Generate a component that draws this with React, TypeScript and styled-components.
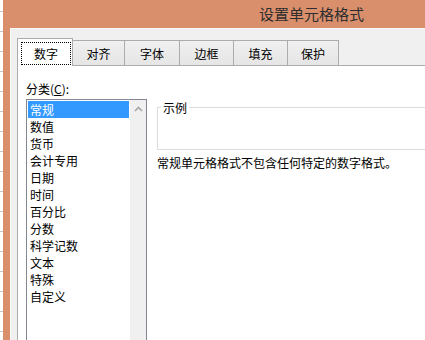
import React from "react";
import styled, { createGlobalStyle } from "styled-components";

const Global = createGlobalStyle`
  html, body { margin: 0; padding: 0; background: #ffffff; }
  body { font-family: "Noto Sans CJK SC", "Noto Sans", sans-serif; }
  * { box-sizing: border-box; }
`;

const Screen = styled.div`
  width: 425px;
  height: 340px;
  overflow: hidden;
  display: flex;
  background: #ffffff;
`;

const SheetEdge = styled.div`
  width: 3px;
  flex: none;
  background: repeating-linear-gradient(
    to bottom,
    #ffffff 0px,
    #ffffff 11px,
    #c6c6c6 11px,
    #c6c6c6 12px,
    #ffffff 12px,
    #ffffff 20px
  );
  background-position: 0 20px;
`;

const Dialog = styled.div`
  flex: 1;
  display: flex;
  flex-direction: column;
  background: #d98e6c;
  min-width: 0;
`;

const TitleBar = styled.div`
  height: 28px;
  flex: none;
  display: flex;
  align-items: center;
  padding-left: 256px;
`;

const Title = styled.span`
  font-size: 15px;
  line-height: 20px;
  color: #2e2e2e;
  white-space: nowrap;
`;

const Body = styled.div`
  flex: 1;
  margin-left: 7px;
  background: #f0f0f0;
  border-top: 1px solid #f8f8f8;
  border-left: 1px solid #f8f8f8;
  padding: 9px 0 0 6px;
  display: flex;
  flex-direction: column;
`;

const TabRow = styled.div`
  display: flex;
  align-items: flex-end;
  height: 28px;
  border-bottom: 1px solid #acacac;
  flex: none;
`;

const Tab = styled.div<{ $active?: boolean; $w: number }>`
  width: ${(p) => p.$w}px;
  flex: none;
  font-size: 12px;
  color: #000000;
  white-space: nowrap;
  ${(p) =>
    p.$active
      ? `
    height: 28px;
    margin-bottom: -1px;
    background: #ffffff;
    border: 1px solid #acacac;
    border-bottom: none;
    padding: 3px 0 0 3px;
  `
      : `
    height: 25px;
    background: linear-gradient(to bottom, #f0f0f0, #e5e5e5);
    border-top: 1px solid #acacac;
    border-right: 1px solid #acacac;
    display: flex;
    align-items: center;
    justify-content: center;
    line-height: 17px;
  `}
`;

const FocusRing = styled.div`
  width: 50px;
  height: 23px;
  border: 1px dotted #000000;
  display: flex;
  align-items: center;
  justify-content: center;
  line-height: 17px;
`;

const Panel = styled.div`
  flex: 1;
  background: #ffffff;
  border-left: 1px solid #acacac;
  padding: 14px 0 0 8px;
  display: grid;
  grid-template-columns: 121px 300px;
  grid-template-rows: auto 1fr;
  column-gap: 10px;
  align-items: start;
`;

const FieldLabel = styled.div`
  grid-column: 1 / span 2;
  font-size: 12px;
  line-height: 17px;
  height: 17px;
  margin-bottom: 2px;
  color: #000000;
  white-space: nowrap;
  u { text-decoration: underline; }
`;

const ListBox = styled.div`
  width: 121px;
  height: 260px;
  border: 1px solid #828790;
  display: flex;
  background: #ffffff;
`;

const Items = styled.ul`
  list-style: none;
  margin: 0;
  padding: 1px;
  flex: 1;
`;

const Item = styled.li<{ $selected?: boolean }>`
  height: 17px;
  line-height: 17px;
  padding-left: 2px;
  font-size: 12px;
  white-space: nowrap;
  color: ${(p) => (p.$selected ? "#ffffff" : "#000000")};
  background: ${(p) => (p.$selected ? "#3399ff" : "transparent")};
`;

const ScrollBar = styled.div`
  width: 16px;
  flex: none;
  background: #f0f0f0;
  display: flex;
  flex-direction: column;
  align-items: center;
`;

const ArrowButton = styled.div`
  height: 17px;
  width: 16px;
  display: flex;
  align-items: center;
  justify-content: center;
`;

const RightColumn = styled.div`
  display: flex;
  flex-direction: column;
`;

const SampleGroup = styled.fieldset`
  margin: 0;
  padding: 0 3px;
  height: 51px;
  border: 1px solid #dcdcdc;
  legend {
    padding: 0 2px;
    font-size: 12px;
    line-height: 17px;
    color: #000000;
  }
`;

const Description = styled.div`
  margin-top: 4px;
  font-size: 12px;
  line-height: 17px;
  color: #000000;
  white-space: nowrap;
`;

const tabs: { label: string; w: number }[] = [
  { label: "数字", w: 56 },
  { label: "对齐", w: 52 },
  { label: "字体", w: 55 },
  { label: "边框", w: 54 },
  { label: "填充", w: 54 },
  { label: "保护", w: 51 },
];

const categories = [
  "常规",
  "数值",
  "货币",
  "会计专用",
  "日期",
  "时间",
  "百分比",
  "分数",
  "科学记数",
  "文本",
  "特殊",
  "自定义",
];

export default function App() {
  return (
    <>
      <Global />
      <Screen>
        <SheetEdge />
        <Dialog>
          <TitleBar>
            <Title>设置单元格格式</Title>
          </TitleBar>
          <Body>
            <TabRow>
              {tabs.map((t, i) =>
                i === 0 ? (
                  <Tab key={t.label} $active $w={t.w}>
                    <FocusRing>{t.label}</FocusRing>
                  </Tab>
                ) : (
                  <Tab key={t.label} $w={t.w}>
                    {t.label}
                  </Tab>
                )
              )}
            </TabRow>
            <Panel>
              <FieldLabel>
                分类(<u>C</u>):
              </FieldLabel>
              <ListBox>
                <Items>
                  {categories.map((c, i) => (
                    <Item key={c} $selected={i === 0}>
                      {c}
                    </Item>
                  ))}
                </Items>
                <ScrollBar>
                  <ArrowButton>
                    <svg width="9" height="6" viewBox="0 0 9 6">
                      <path
                        d="M1 5 L4.5 1.5 L8 5"
                        fill="none"
                        stroke="#a6a6a6"
                        strokeWidth="1.6"
                      />
                    </svg>
                  </ArrowButton>
                </ScrollBar>
              </ListBox>
              <RightColumn>
                <SampleGroup>
                  <legend>示例</legend>
                </SampleGroup>
                <Description>常规单元格格式不包含任何特定的数字格式。</Description>
              </RightColumn>
            </Panel>
          </Body>
        </Dialog>
      </Screen>
    </>
  );
}
